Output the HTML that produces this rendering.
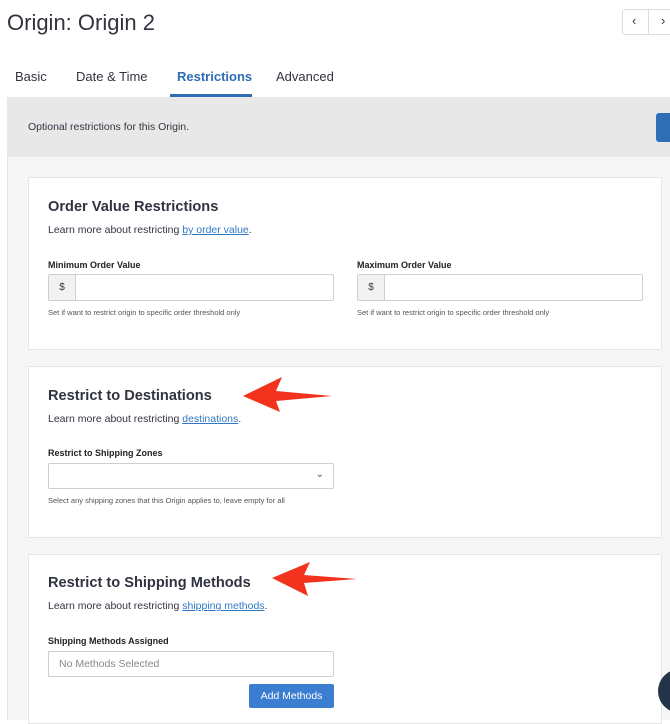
<!DOCTYPE html>
<html><head><style>
*{box-sizing:border-box;margin:0;padding:0}
body{width:670px;height:720px;overflow:hidden;background:#fff;font-family:"Liberation Sans",sans-serif;color:#313440;position:relative}
.a{position:absolute}
h1{position:absolute;left:7px;top:10px;font-size:22px;font-weight:normal;color:#313440}
.tab{position:absolute;top:69px;font-size:13px;color:#313440}
.panel{position:absolute;left:7px;top:97px;width:663px;height:623px;background:#f6f6f6;border-left:1px solid #e3e3e3}
.band{position:absolute;left:7px;top:97px;width:663px;height:60px;background:#e8e8e8}
.card{position:absolute;left:28px;width:634px;background:#fff;border:1px solid #e6e6e6}
.h{position:absolute;left:19px;font-size:14.6px;font-weight:bold;color:#313440}
.l{position:absolute;left:19px;font-size:10.5px;color:#313440}
.l u{color:#2f78c4}
.lab{position:absolute;font-size:9px;font-weight:bold;color:#222}
.in{position:absolute;height:27px;border:1px solid #cfcfcf;border-radius:2px;background:#fff}
.help{position:absolute;font-size:7.5px;color:#555}
</style></head><body>
<h1>Origin: Origin 2</h1>
<div class="a" style="left:622px;top:9px;width:50px;height:26px;border:1px solid #ddd;border-radius:3px"></div>
<div class="a" style="left:648px;top:9px;width:1px;height:26px;background:#ddd"></div>
<div class="a" style="left:632px;top:13px;font-size:13px">‹</div>
<div class="a" style="left:661px;top:13px;font-size:13px">›</div>
<div class="tab" style="left:15px">Basic</div>
<div class="tab" style="left:76px">Date &amp; Time</div>
<div class="tab" style="left:177px;color:#2f6db5;font-weight:bold">Restrictions</div>
<div class="tab" style="left:276px">Advanced</div>
<div class="a" style="left:170px;top:94px;width:82px;height:3px;background:#2f6db5"></div>
<div class="panel"></div>
<div class="band"></div>
<div class="a" style="left:28px;top:121px;font-size:10.5px">Optional restrictions for this Origin.</div>
<div class="a" style="left:656px;top:113px;width:20px;height:29px;background:#2f6db5;border-radius:3px"></div>

<div class="card" style="top:177px;height:173px">
<div class="h" style="top:21px">Order Value Restrictions</div>
<div class="l" style="top:46px">Learn more about restricting <u>by order value</u>.</div>
<div class="lab" style="left:19px;top:82px">Minimum Order Value</div>
<div class="in" style="left:19px;top:96px;width:286px"><div style="width:27px;height:25px;background:#f2f2f2;border-right:1px solid #cfcfcf;font-size:10px;text-align:center;line-height:25px">$</div></div>
<div class="help" style="left:19px;top:130px">Set if want to restrict origin to specific order threshold only</div>
<div class="lab" style="left:328px;top:82px">Maximum Order Value</div>
<div class="in" style="left:328px;top:96px;width:286px"><div style="width:27px;height:25px;background:#f2f2f2;border-right:1px solid #cfcfcf;font-size:10px;text-align:center;line-height:25px">$</div></div>
<div class="help" style="left:328px;top:130px">Set if want to restrict origin to specific order threshold only</div>
</div>

<div class="card" style="top:366px;height:172px">
<div class="h" style="top:21px">Restrict to Destinations</div>
<div class="l" style="top:46px">Learn more about restricting <u>destinations</u>.</div>
<div class="lab" style="left:19px;top:81px">Restrict to Shipping Zones</div>
<div class="in" style="left:19px;top:96px;width:286px;height:26px"><span style="position:absolute;right:9px;top:5px;font-size:10px;color:#555">⌄</span></div>
<div class="help" style="left:19px;top:129px">Select any shipping zones that this Origin applies to, leave empty for all</div>
</div>

<div class="card" style="top:554px;height:170px">
<div class="h" style="top:20px">Restrict to Shipping Methods</div>
<div class="l" style="top:45px">Learn more about restricting <u>shipping methods</u>.</div>
<div class="lab" style="left:19px;top:81px">Shipping Methods Assigned</div>
<div class="in" style="left:19px;top:96px;width:286px;height:26px;font-size:10.5px;color:#888;padding:6px 10px">No Methods Selected</div>
<div class="a" style="left:220px;top:129px;width:85px;height:24px;background:#3b7dd0;border-radius:2px;color:#fff;font-size:10.5px;text-align:center;line-height:24px">Add Methods</div>
</div>

<svg class="a" style="left:0;top:0" width="670" height="720">
<path d="M243 396 L282 377 L276 391 L332 396 L276 401 L280 412 Z" fill="#f2321d"/>
<path d="M272 578 L310 562 L304 575 L357 579 L304 583 L308 596 Z" fill="#f2321d"/>
<circle cx="680" cy="691" r="22" fill="#24354a"/>
</svg>
</body></html>
